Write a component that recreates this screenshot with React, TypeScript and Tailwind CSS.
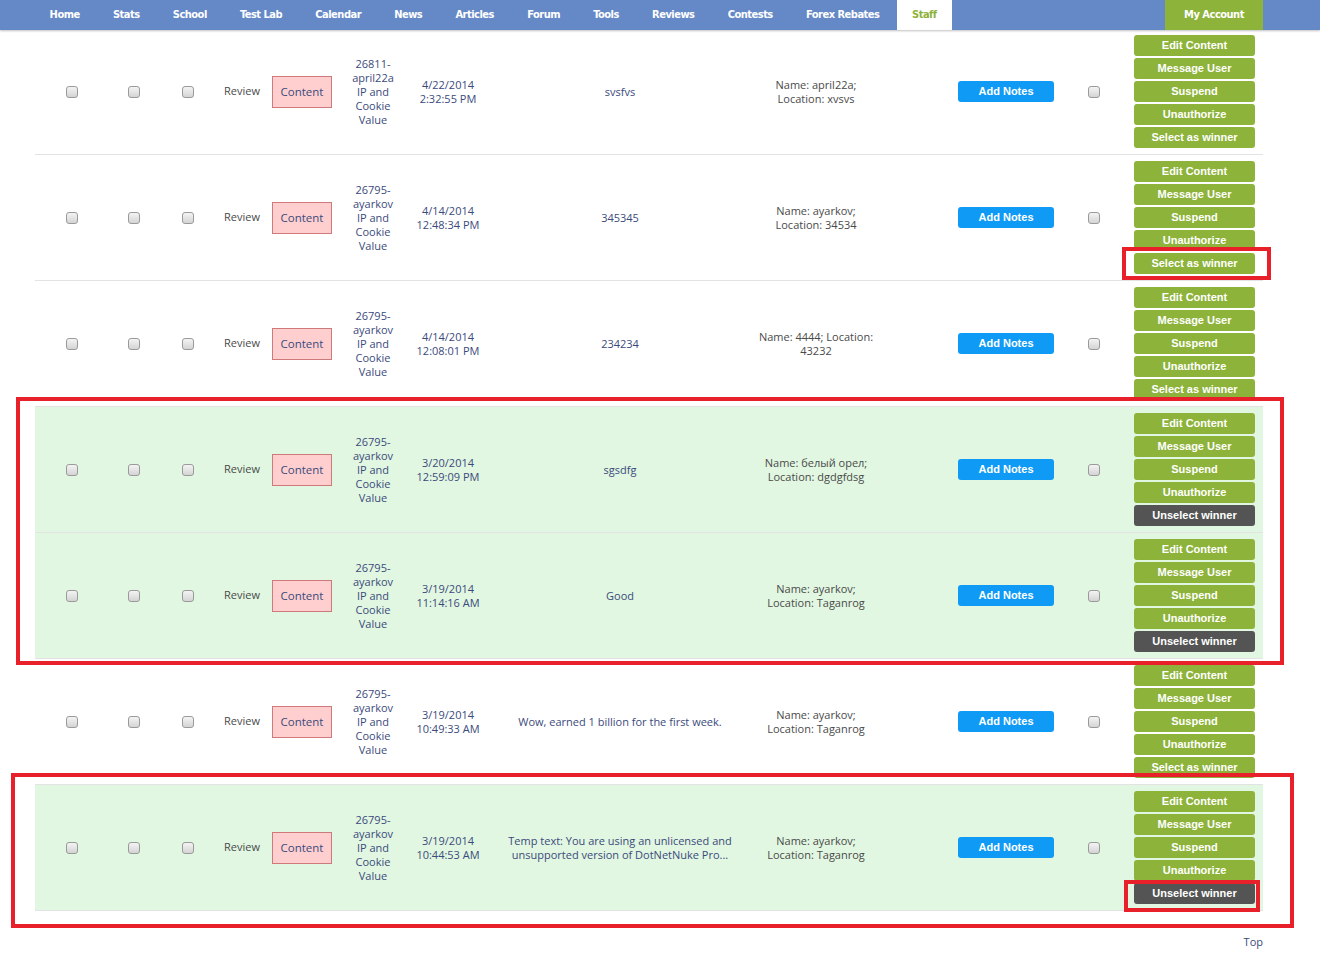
import React from 'react';

type Row = {
  id: string[];
  date: string[];
  text: string[];
  name: string[];
  winner: boolean;
};

const navItems = ['Home', 'Stats', 'School', 'Test Lab', 'Calendar', 'News', 'Articles', 'Forum', 'Tools', 'Reviews', 'Contests', 'Forex Rebates'];

const ayarkov = ['26795-', 'ayarkov', 'IP and', 'Cookie', 'Value'];

const rows: Row[] = [
  { id: ['26811-', 'april22a', 'IP and', 'Cookie', 'Value'], date: ['4/22/2014', '2:32:55 PM'], text: ['svsfvs'], name: ['Name: april22a;', 'Location: xvsvs'], winner: false },
  { id: ayarkov, date: ['4/14/2014', '12:48:34 PM'], text: ['345345'], name: ['Name: ayarkov;', 'Location: 34534'], winner: false },
  { id: ayarkov, date: ['4/14/2014', '12:08:01 PM'], text: ['234234'], name: ['Name: 4444; Location:', '43232'], winner: false },
  { id: ayarkov, date: ['3/20/2014', '12:59:09 PM'], text: ['sgsdfg'], name: ['Name: белый орел;', 'Location: dgdgfdsg'], winner: true },
  { id: ayarkov, date: ['3/19/2014', '11:14:16 AM'], text: ['Good'], name: ['Name: ayarkov;', 'Location: Taganrog'], winner: true },
  { id: ayarkov, date: ['3/19/2014', '10:49:33 AM'], text: ['Wow, earned 1 billion for the first week.'], name: ['Name: ayarkov;', 'Location: Taganrog'], winner: false },
  { id: ayarkov, date: ['3/19/2014', '10:44:53 AM'], text: ['Temp text: You are using an unlicensed and', 'unsupported version of DotNetNuke Pro...'], name: ['Name: ayarkov;', 'Location: Taganrog'], winner: true },
];

function Checkbox() {
  return <div className="w-[12px] h-[12px] rounded-[3px] border border-[#9a9a9a] bg-gradient-to-b from-[#f4f4f4] to-[#d4d4d4]" />;
}

function Lines({ lines, className }: { lines: string[]; className: string }) {
  return (
    <div className={`text-center leading-[14px] whitespace-nowrap ${className}`}>
      {lines.map((l, i) => (
        <div key={i}>{l}</div>
      ))}
    </div>
  );
}

function ActionButton({ label, dark }: { label: string; dark?: boolean }) {
  return (
    <div
      className={`w-[121px] h-[21px] rounded-[3px] flex items-center justify-center text-white font-bold text-[11px] ${dark ? 'bg-[#545454]' : 'bg-[#8db33a]'}`}
      style={{ fontFamily: '"Liberation Sans", Arial, sans-serif' }}
    >
      {label}
    </div>
  );
}

export default function App() {
  return (
    <div className="relative w-[1320px] min-h-[960px] bg-white" style={{ fontFamily: '"Open Sans", "Noto Sans", sans-serif' }}>
      {/* Top nav */}
      <div className="relative z-10 h-[30px] bg-[#6589c7] shadow-[0_1px_2px_rgba(0,0,0,0.25)]">
        <div
          className="ml-[33px] w-[1230px] h-full flex items-stretch text-white font-bold text-[11px] tracking-[-0.5px]"
          style={{ fontFamily: '"DejaVu Sans Condensed", "Liberation Sans", sans-serif' }}
        >
          {navItems.map((n) => (
            <div key={n} className="px-[16.6px] flex items-center">{n}</div>
          ))}
          <div className="ml-[1px] px-[15px] flex items-center bg-white text-[#8db33a]">Staff</div>
          <div className="ml-auto w-[98px] flex items-center justify-center bg-[#8db33a]">My Account</div>
        </div>
      </div>

      {/* Table */}
      <div className="ml-[35px] w-[1228px] -mt-[1px] text-[11px]">
        {rows.map((r, i) => (
          <div
            key={i}
            className={`h-[126px] border-b border-[#e3e3e3] grid items-center grid-cols-[74px_50px_58px_50px_70px_72px_78px_266px_126px_67px_120px_56px_141px] ${r.winner ? 'bg-[#e1f7e1]' : 'bg-white'}`}
          >
            <div className="flex justify-center"><Checkbox /></div>
            <div className="flex justify-center"><Checkbox /></div>
            <div className="flex justify-center"><Checkbox /></div>
            <div className="text-center text-[#4a4a4a]">Review</div>
            <div className="flex justify-center">
              <div className="w-[60px] h-[32px] border border-[#cf7a7a] bg-[#ffcfcf] flex items-center justify-center text-[11.5px] text-[#3b4a7c]">Content</div>
            </div>
            <Lines lines={r.id} className="text-[#3b4a7c]" />
            <Lines lines={r.date} className="text-[#3b4a7c]" />
            <Lines lines={r.text} className="text-[#3b4a7c]" />
            <Lines lines={r.name} className="text-[#4a4a4a]" />
            <div />
            <div className="flex justify-center">
              <div
                className="w-[96px] h-[21px] rounded-[3px] bg-[#0f9bf5] text-white font-bold text-[11px] flex items-center justify-center"
                style={{ fontFamily: '"Liberation Sans", Arial, sans-serif' }}
              >
                Add Notes
              </div>
            </div>
            <div className="flex justify-center"><Checkbox /></div>
            <div className="pl-[12px] flex flex-col gap-[2px]">
              <ActionButton label="Edit Content" />
              <ActionButton label="Message User" />
              <ActionButton label="Suspend" />
              <ActionButton label="Unauthorize" />
              {r.winner ? <ActionButton label="Unselect winner" dark /> : <ActionButton label="Select as winner" />}
            </div>
          </div>
        ))}
        <div className="flex justify-end pt-[23px] text-[11px] text-[#3b4a7c]">Top</div>
      </div>

      {/* Red annotation boxes */}
      <div className="absolute left-[1122px] top-[247px] w-[149px] h-[33px] border-[4px] border-[#e8202a]" />
      <div className="absolute left-[16px] top-[397px] w-[1268px] h-[268px] border-[4px] border-[#e8202a]" />
      <div className="absolute left-[11px] top-[773px] w-[1283px] h-[155px] border-[4px] border-[#e8202a]" />
      <div className="absolute left-[1124px] top-[880px] w-[136px] h-[32px] border-[4px] border-[#e8202a]" />
    </div>
  );
}
